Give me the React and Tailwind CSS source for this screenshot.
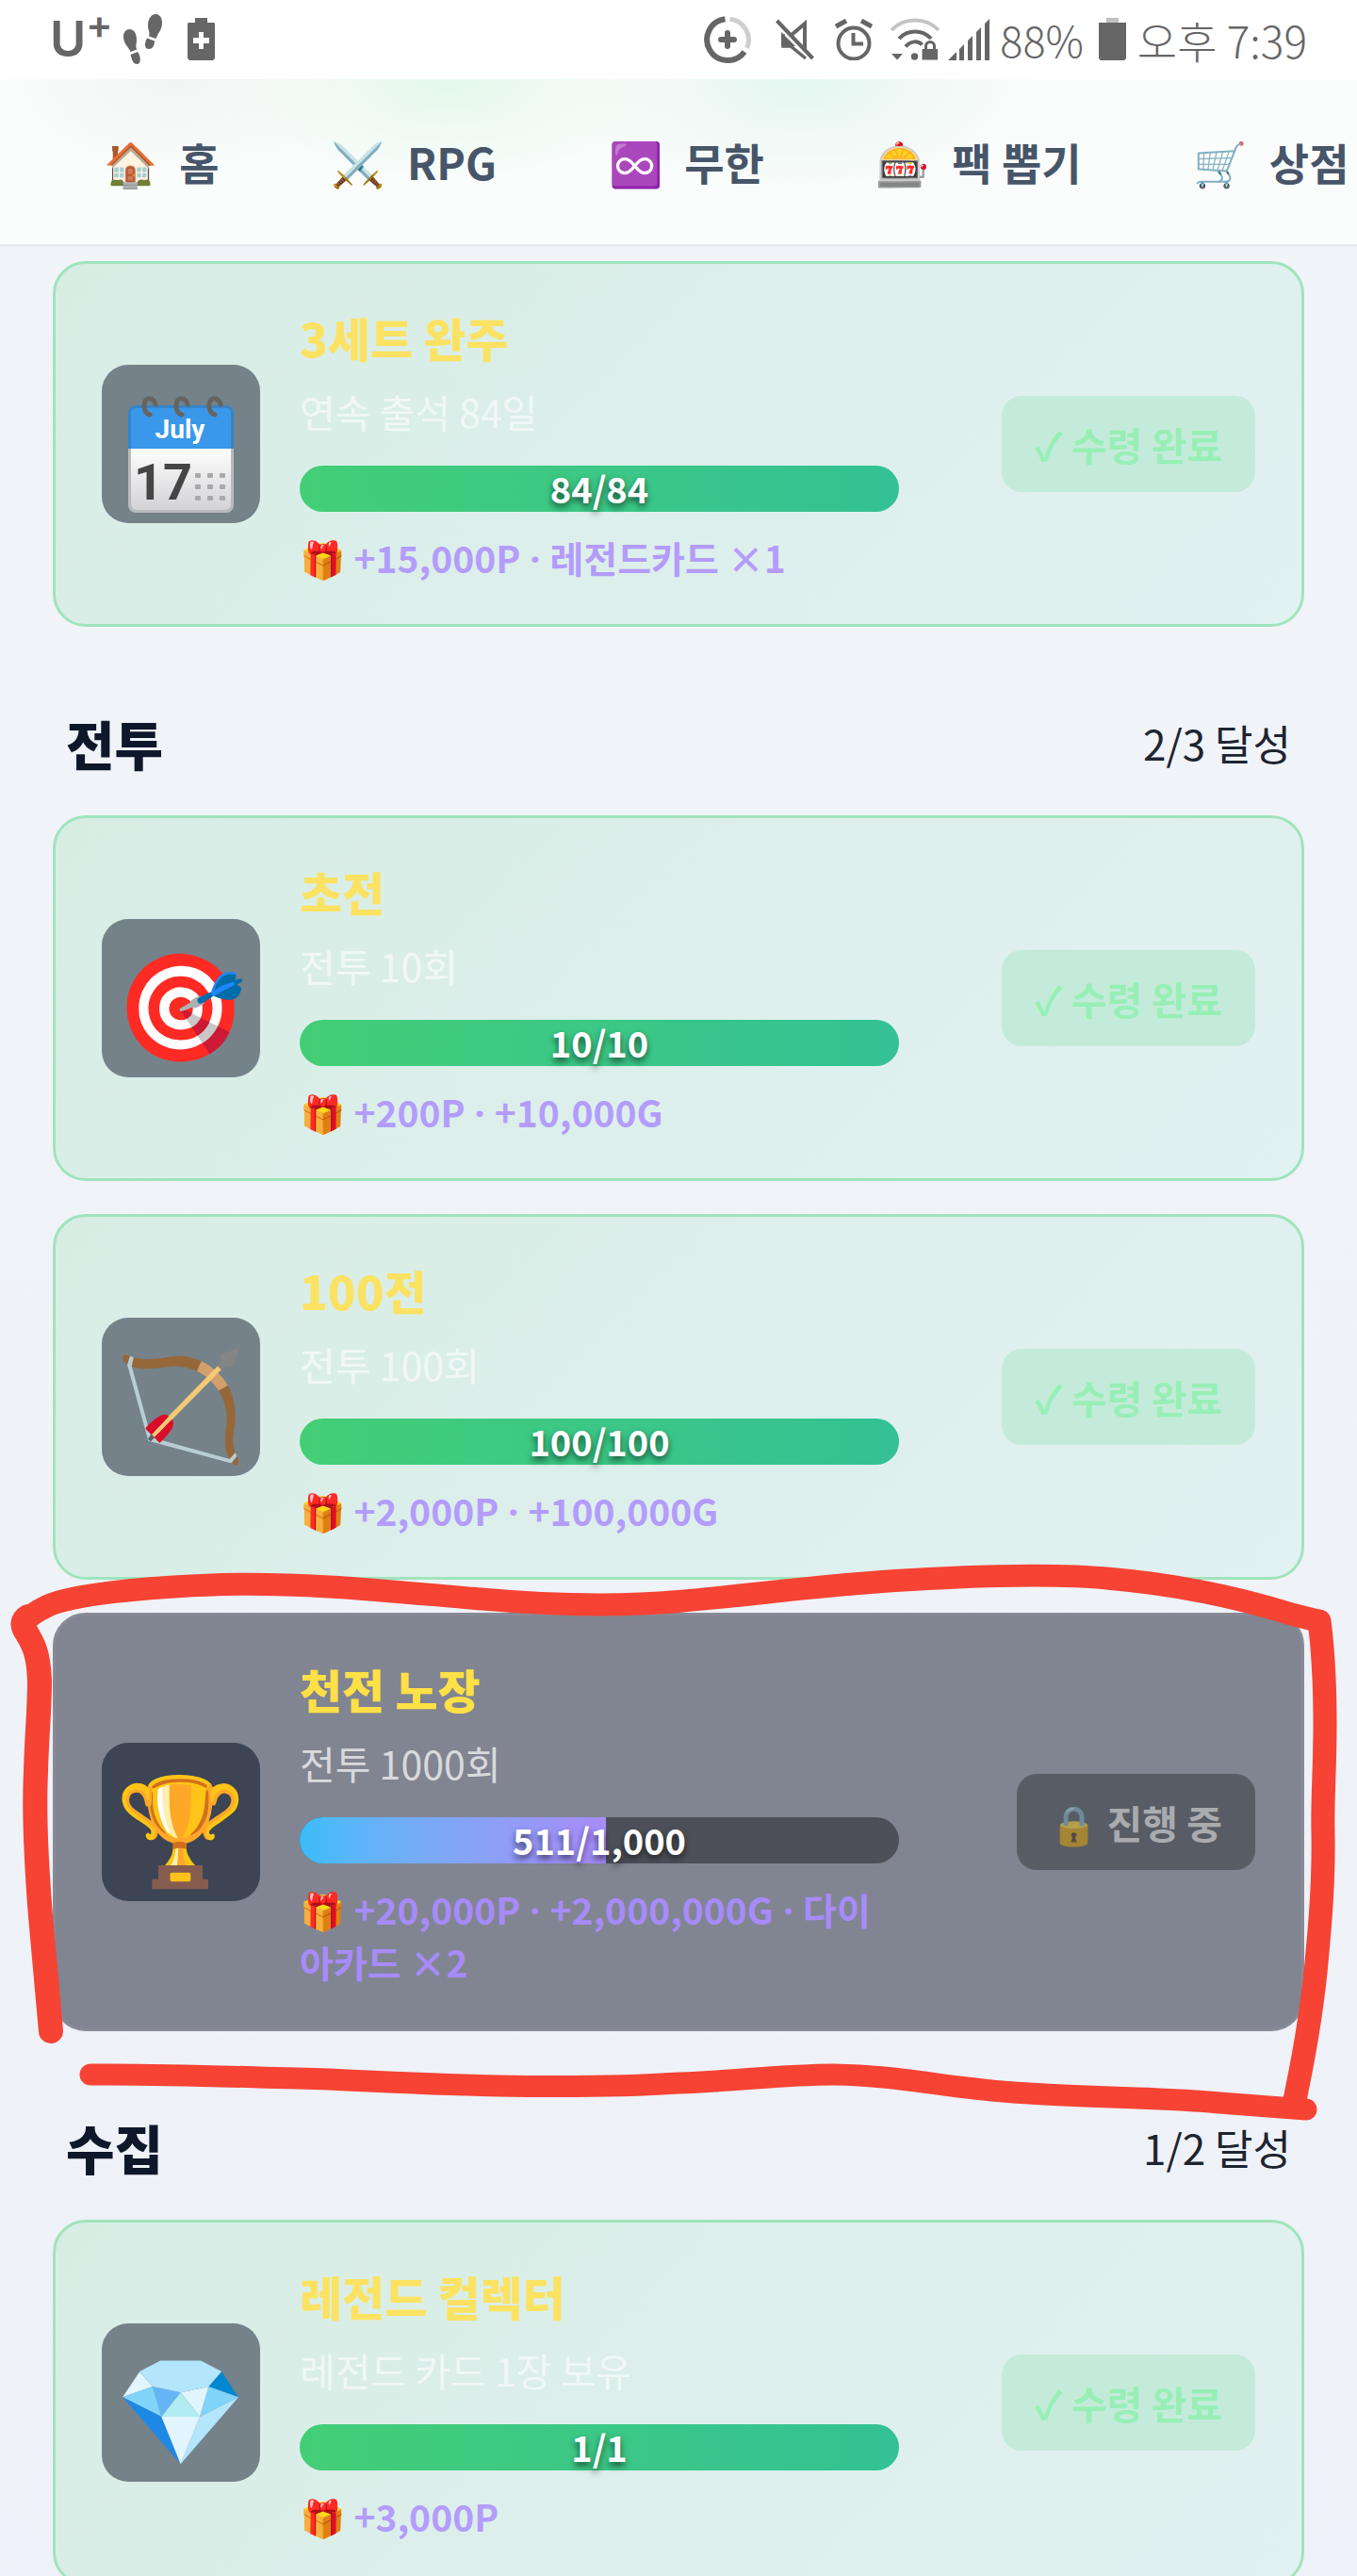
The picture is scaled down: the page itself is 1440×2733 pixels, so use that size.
import React from "react";

const NAV = [
  { emoji: "🏠", label: "홈" },
  { emoji: "⚔️", label: "RPG" },
  { emoji: "♾️", label: "무한" },
  { emoji: "🎰", label: "팩 뽑기" },
  { emoji: "🛒", label: "상점" },
];

const SECTIONS = [
  {
    items: [
      { icon: "calendar", title: "3세트 완주", desc: "연속 출석 84일", now: 84, max: 84, rewards: ["+15,000P", "레전드카드 ×1"] },
    ],
  },
  {
    title: "전투",
    count: "2/3 달성",
    items: [
      { emoji: "🎯", title: "초전", desc: "전투 10회", now: 10, max: 10, rewards: ["+200P", "+10,000G"] },
      { emoji: "🏹", title: "100전", desc: "전투 100회", now: 100, max: 100, rewards: ["+2,000P", "+100,000G"] },
      { emoji: "🏆", title: "천전 노장", desc: "전투 1000회", now: 511, max: 1000, rewards: ["+20,000P", "+2,000,000G", "다이아카드 ×2"], marked: true },
    ],
  },
  {
    title: "수집",
    count: "1/2 달성",
    items: [
      { emoji: "💎", title: "레전드 컬렉터", desc: "레전드 카드 1장 보유", now: 1, max: 1, rewards: ["+3,000P"] },
    ],
  },
];

function StatusBar() {
  return (
    <header className="flex h-[84px] shrink-0 items-center justify-between bg-white px-[53px] text-[#666666]">
      <div className="flex items-center">
        <span className="flex items-start font-['Inter',sans-serif] text-[52px] leading-[52px] font-semibold">
          U<span className="text-[42px] leading-[20px]">+</span>
        </span>
        <svg className="ml-[10px] h-[54px] w-[42px]" viewBox="0 0 42 54" fill="currentColor" aria-hidden="true">
          <path d="M7.500 16c5 0 7.500 5 7.500 11 0 5-1.500 7 .3 10.500L8.500 40C7.500 36 1 32 1 24c0-4 2-8 6.500-8Z" />
          <path d="M8.500 43l7.500-3c3 3 4.500 13-.3 13S10 48 8.500 43Z" />
          <path d="M35 0c5 0 7 4.500 7 9 0 8-4.500 11-6.500 17L28 23.500C29.500 19 27 17 27 12c0-6 3-12 8-12Z" />
          <path d="M26 25.500l8 3c0 5-2.500 8.500-6 8.500-5 0-5-6-2-11.500Z" />
        </svg>
        <svg className="ml-[27px] h-[46px] w-[30px]" viewBox="0 0 30 46" fill="currentColor" aria-hidden="true">
          <path fillRule="evenodd" d="M8 0h13v5h7l1 1v37l-2 2H2l-2-2V6l1-1h7ZM12 15v6H6v6h6v6h5v-6h6v-6h-6v-6Z" />
        </svg>
      </div>
      <div className="flex items-center">
        <svg className="h-[50px] w-[50px]" viewBox="0 0 50 50" fill="none" stroke="currentColor" strokeWidth="6" aria-hidden="true">
          <path d="M27.500 3.200A22 22 0 0 1 45.500 34" stroke="#cfcfcf" strokeWidth="5" />
          <path d="M22.500 3.200A22 22 0 1 0 43 38" />
          <path d="M25 18v14M18 25h14" strokeLinecap="round" />
        </svg>
        <svg className="ml-[26px] h-[44px] w-[42px]" viewBox="0 0 42 44" fill="none" stroke="currentColor" strokeWidth="3.500" aria-hidden="true">
          <path d="M1.500 2l38 40" strokeWidth="4" />
          <path d="M31 32V5L17 17" strokeWidth="4" />
          <path d="M8 16v13h8l16 13" />
          <path d="M6 14l15 15H6Z" fill="currentColor" stroke="none" />
        </svg>
        <svg className="ml-[21px] h-[44px] w-[40px]" viewBox="0 0 40 44" fill="none" stroke="currentColor" strokeWidth="4" aria-hidden="true">
          <circle cx="20" cy="26" r="16.500" />
          <path d="M19.500 15v11.500H30" />
          <path d="M1 8l11-6M28 2l11 6" strokeWidth="5" />
        </svg>
        <svg className="ml-[19px] h-[46px] w-[52px]" viewBox="0 0 52 46" fill="none" stroke="currentColor" strokeWidth="4" aria-hidden="true">
          <path d="M1 13C14-1 38-1 51 13" stroke="#c4c4c4" />
          <path d="M9 22C18 12 34 12 43 22M16 30.500c5-6 13-7 17.500-2" />
          <path d="M1 38h12l-6 6.500Z" fill="currentColor" stroke="none" />
          <circle cx="25.500" cy="41" r="3.700" fill="currentColor" stroke="none" />
          <path d="M33.500 33H50v11.500H33.500Z" fill="currentColor" stroke="none" />
          <path d="M37.500 34v-4c0-6 9-6 9 0v4" strokeWidth="3" />
        </svg>
        <svg className="ml-[9px] h-[46px] w-[44px]" viewBox="0 0 44 46" fill="currentColor" aria-hidden="true">
          <path d="M0 45l9-9v9ZM12 45V33l5-5v17ZM21 45V24l5-5v26ZM30 45V15l5-5v35ZM39 45V6l5-5v44Z" />
        </svg>
        <span className="ml-[11px] text-[45px] leading-[66px] font-light">88%</span>
        <svg className="ml-[16px] h-[46px] w-[29px]" viewBox="0 0 29 46" fill="currentColor" aria-hidden="true">
          <path d="M8 0h13v6H8Z" fill="#c0c0c0" />
          <path d="M0 5h29v38l-2 2H2l-2-2Z" />
        </svg>
        <time className="ml-[12px] text-[46px] leading-[66px] font-light">오후 7:39</time>
      </div>
    </header>
  );
}

function NavBar() {
  return (
    <nav className="h-[178px] shrink-0 overflow-hidden border-b-3 border-[#e8ebec] bg-[#fbfdfd] bg-[radial-gradient(ellipse_250px_120px_at_33%_0%,#e5f8ea,transparent),radial-gradient(ellipse_260px_130px_at_59%_0%,#e5f6f0,transparent),radial-gradient(ellipse_200px_110px_at_13%_0%,#f3f4f4,transparent)]">
      <ul className="flex h-full items-center gap-[21px] pb-[2px] pl-[61px] whitespace-nowrap">
        {NAV.map((n) => (
          <li key={n.label} className="shrink-0">
            <a href="#" className="flex items-center gap-[23px] px-[49px] text-[46px] leading-[68px] font-bold text-[#475569]">
              <span aria-hidden="true">{n.emoji}</span>
              {n.label}
            </a>
          </li>
        ))}
      </ul>
    </nav>
  );
}

function CalendarIcon() {
  return (
    <svg className="mt-[22px] h-[124px] w-[112px]" viewBox="0 0 112 124" aria-hidden="true">
      <defs>
        <linearGradient id="cal-paper" x1="0" y1="0" x2="0" y2="1">
          <stop offset="0" stopColor="#ffffff" />
          <stop offset="1" stopColor="#d3d3d6" />
        </linearGradient>
      </defs>
      <path d="M0 54h112v62a8 8 0 0 1-8 8H8a8 8 0 0 1-8-8Z" fill="#b9babd" />
      <path d="M3 54h106v61a6 6 0 0 1-6 6H9a6 6 0 0 1-6-6Z" fill="url(#cal-paper)" />
      <path d="M0 56V18a8 8 0 0 1 8-8h96a8 8 0 0 1 8 8v38Z" fill="#3485c8" />
      <path d="M3 56V18a5 5 0 0 1 5-5h96a5 5 0 0 1 5 5v38Z" fill="#3998e9" />
      <g fill="none" stroke="#66635f" strokeWidth="5" strokeLinecap="round">
        <path d="M29 9C27 1 17 0 17 10c0 6 2 9 6 10" />
        <path d="M63 9C61 1 51 0 51 10c0 6 2 9 6 10" />
        <path d="M98 9C96 1 86 0 86 10c0 6 2 9 6 10" />
      </g>
      <text x="55" y="45" textAnchor="middle" fontFamily="Roboto, sans-serif" fontWeight="700" fontSize="28" fill="#ffffff">
        July
      </text>
      <text x="37" y="110" textAnchor="middle" fontFamily="Roboto, sans-serif" fontWeight="700" fontSize="54" fill="#454545">
        17
      </text>
      <g fill="#a9a9ab">
        {[82, 94, 106].map((y) =>
          [71, 84, 97].map((x) => <rect key={`${x}-${y}`} x={x} y={y} width="6" height="5" rx="1" />)
        )}
      </g>
    </svg>
  );
}

function Marker() {
  return (
    <svg
      className="pointer-events-none absolute -top-[61px] -left-14 h-[620px] w-[calc(100%+112px)]"
      viewBox="0 1650 1440 620"
      preserveAspectRatio="none"
      fill="none"
      stroke="#f64334"
      strokeLinecap="round"
      strokeLinejoin="round"
      aria-hidden="true"
    >
      <path strokeWidth="26" d="M54 2155C50 2110 46 2070 43 2033C38 1970 36 1920 38 1880C39 1840 42 1815 42 1784C41 1755 36 1745 28 1732Q20 1721 30 1715" />
      <path strokeWidth="24" d="M25 1722Q30 1714 50 1704C75 1692 150 1684 236 1681C330 1679 410 1688 505 1696C560 1701 640 1706 720 1699C800 1692 860 1683 950 1677C1030 1672 1120 1669 1179 1675C1260 1682 1330 1700 1372 1713L1400 1720" />
      <path strokeWidth="25" d="M1400 1720C1404 1750 1406 1790 1406 1830C1406 1880 1403 1910 1404 1945C1405 2000 1400 2050 1398 2071C1394 2120 1388 2160 1376 2218L1374 2228" />
      <path strokeWidth="23" d="M96 2201C180 2200 260 2204 349 2206C430 2210 480 2212 528 2213C590 2214 660 2214 720 2210C780 2208 830 2201 885 2201C960 2202 1010 2217 1092 2221C1160 2226 1220 2224 1294 2231L1386 2238" />
    </svg>
  );
}

function Quest({ item }) {
  const done = item.now >= item.max;
  const pct = (item.now / item.max) * 100;
  return (
    <li className="relative">
      <article
        className={
          done
            ? "grid grid-cols-[168px_1fr_336px] items-center gap-[42px] rounded-[35px] border-3 border-[#9fe4bc] bg-linear-135 from-[#d7ede4] to-[#e2f1f2] px-[49px] py-[43px]"
            : "grid grid-cols-[168px_1fr_336px] items-center gap-[42px] rounded-[35px] border-3 border-[#888b97] bg-[#818591] px-[49px] py-[43px]"
        }
      >
        <div
          className={
            done
              ? "flex size-[168px] items-center justify-center rounded-[28px] bg-[#758289] text-[112px] leading-[168px]"
              : "flex size-[168px] items-center justify-center rounded-[28px] bg-[#3d4453] text-[112px] leading-[168px]"
          }
          aria-hidden="true"
        >
          {item.icon === "calendar" ? <CalendarIcon /> : item.emoji}
        </div>
        <div>
          <h3 className={done ? "text-[49px] leading-[70px] font-black text-[#fce263]" : "text-[49px] leading-[70px] font-black text-[#ffe047]"}>
            {item.title}
          </h3>
          <p className={done ? "mt-[14px] text-[41px] leading-[58px] text-[#f0f8f6]" : "mt-[14px] text-[41px] leading-[58px] text-[#d9dadd]"}>
            {item.desc}
          </p>
          <div
            className="relative mt-[29px] h-[49px]"
            role="progressbar"
            aria-label={item.title}
            aria-valuenow={item.now}
            aria-valuemax={item.max}
          >
            <div className="h-full overflow-hidden rounded-full bg-[#4d5058]">
              <div
                className={done ? "h-full bg-linear-90 from-[#43ce76] to-[#34c194]" : "h-full bg-linear-90 from-[#38bdf8] to-[#a78bfa]"}
                style={{ width: `${pct}%` }}
              />
            </div>
            <span className="absolute inset-0 text-center text-[38px] leading-[47px] font-bold text-white [text-shadow:0_4px_7px_rgba(0,0,0,0.6)]">
              {item.now.toLocaleString("en-US")}/{item.max.toLocaleString("en-US")}
            </span>
          </div>
          <p className={done ? "mt-5 text-[39px] leading-[56px] font-bold text-[#b39cfb]" : "mt-5 text-[39px] leading-[56px] font-bold text-[#a78bfa]"}>
            🎁{" "}
            {item.rewards.map((r, i) => (
              <React.Fragment key={r}>
                {i > 0 && <span className="font-['Noto_Sans',sans-serif] leading-none"> · </span>}
                {r}
              </React.Fragment>
            ))}
          </p>
        </div>
        {done ? (
          <button type="button" className="justify-self-end rounded-[21px] bg-[#c4ebda] px-[35px] py-[21px] text-[41px] leading-[60px] font-bold text-[#97efb6]">
            ✓ 수령 완료
          </button>
        ) : (
          <button type="button" disabled className="justify-self-end rounded-[21px] bg-[#585c64] px-[35px] py-[21px] text-[41px] leading-[60px] font-bold text-[#a9abaf]">
            <span className="opacity-55">🔒</span> 진행 중
          </button>
        )}
      </article>
      {item.marked && <Marker />}
    </li>
  );
}

export default function App() {
  return (
    <div className="flex h-screen flex-col overflow-hidden bg-linear-to-b from-[#f1f5f9] to-[#eef1f7] font-['Noto_Sans_CJK_KR','Noto_Color_Emoji',sans-serif]">
      <StatusBar />
      <NavBar />
      <main className="min-h-0 flex-1 overflow-hidden px-14 pt-[15px]">
        {SECTIONS.map((s, i) => (
          <section key={i}>
            {s.title && (
              <div className="flex h-[200px] items-center justify-between px-[14px] pt-[54px] pb-2">
                <h2 className="text-[56px] leading-[80px] font-black text-[#0f172a]">{s.title}</h2>
                <span className="text-[44px] leading-[64px] text-[#1e2430]">{s.count}</span>
              </div>
            )}
            <ul className="flex flex-col gap-[35px]">
              {s.items.map((it) => (
                <Quest key={it.title} item={it} />
              ))}
            </ul>
          </section>
        ))}
      </main>
    </div>
  );
}
